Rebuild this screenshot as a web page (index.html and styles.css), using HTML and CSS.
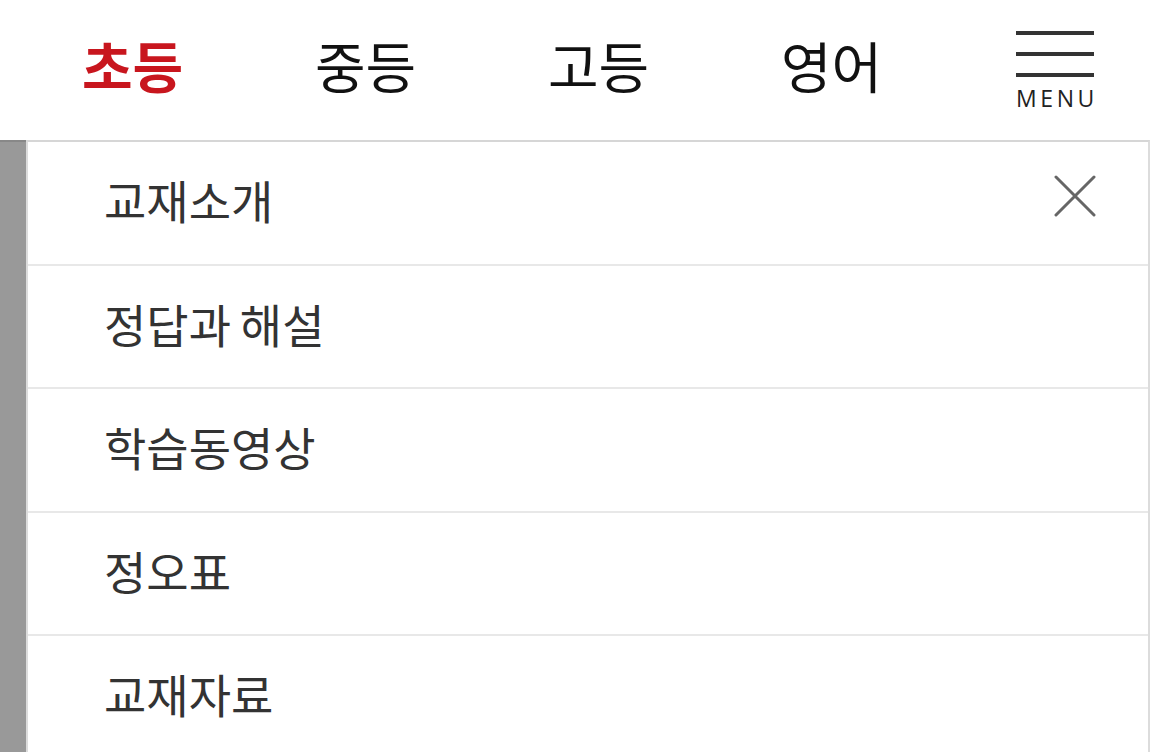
FILE: index.html
```html
<!DOCTYPE html>
<html lang="ko">
<head>
<meta charset="utf-8">
<link rel="stylesheet" href="styles.css">
</head>
<body>
<header class="top">
  <nav class="grades">
    <a class="grade active">초등</a>
    <a class="grade">중등</a>
    <a class="grade">고등</a>
    <a class="grade">영어</a>
  </nav>
  <button class="menu-btn">
    <span class="bars"><i></i><i></i><i></i></span>
    <span class="menu-label">MENU</span>
  </button>
</header>
<div class="overlay">
  <div class="panel">
    <ul class="menu-list">
      <li class="item">교재소개
        <span class="close"><svg width="42" height="42" viewBox="0 0 42 42"><path d="M2 2 L40 40 M40 2 L2 40" stroke="#666" stroke-width="3" stroke-linecap="round" fill="none"/></svg></span>
      </li>
      <li class="item">정답과 해설</li>
      <li class="item">학습동영상</li>
      <li class="item">정오표</li>
      <li class="item">교재자료</li>
    </ul>
  </div>
</div>
</body>
</html>
```
FILE: styles.css
```css
html, body {
  margin: 0;
  padding: 0;
  height: 100%;
  overflow: hidden;
}
body {
  font-family: "Noto Sans CJK KR", "Noto Sans", sans-serif;
  background: #fff;
}
.top {
  height: 140px;
  display: flex;
  align-items: center;
  padding-left: 16px;
  padding-right: 56px;
  box-sizing: border-box;
  background: #fff;
}
.grades {
  display: flex;
  flex: 1;
}
.grade {
  width: 233px;
  text-align: center;
  font-size: 55px;
  font-weight: 400;
  color: #111;
  line-height: 1;
  padding-bottom: 12px;
}
.grade.active {
  color: #c8161e;
  font-weight: 700;
}
.menu-btn {
  border: 0;
  background: none;
  padding: 0;
  margin-top: 0;
  display: flex;
  flex-direction: column;
  align-items: stretch;
  width: 78px;
}
.bars {
  display: flex;
  flex-direction: column;
  gap: 17px;
}
.bars i {
  display: block;
  height: 4px;
  background: #333;
}
.menu-label {
  font-family: "Open Sans", sans-serif;
  font-size: 23px;
  letter-spacing: 3.6px;
  margin-right: -3.6px;
  color: #222;
  line-height: 1;
  margin-top: 10px;
  text-align: center;
}
.overlay {
  background: #999;
  border-top: 2px solid #888;
  height: 612px;
  padding-left: 26px;
  box-sizing: border-box;
}
.panel {
  background: #fff;
  border: 2px solid #dcdcdc;
  border-top-color: #d6d6d6;
  border-bottom: 0;
  box-sizing: border-box;
  position: relative;
  top: -2px;
  height: calc(100% + 2px);
}
.menu-list {
  list-style: none;
  margin: 0;
  padding: 0;
}
.item {
  position: relative;
  height: 114.5px;
  padding-bottom: 7px;
  box-sizing: content-box;
  border-bottom: 2px solid #e8e8e8;
  display: flex;
  align-items: center;
  padding-left: 76px;
  font-size: 46px;
  font-weight: 400;
  word-spacing: -4px;
  color: #333;
  line-height: 1;
}
.close {
  position: absolute;
  right: 52px;
  top: 33px;
  width: 42px;
  height: 42px;
}
.close svg {
  display: block;
}
```
